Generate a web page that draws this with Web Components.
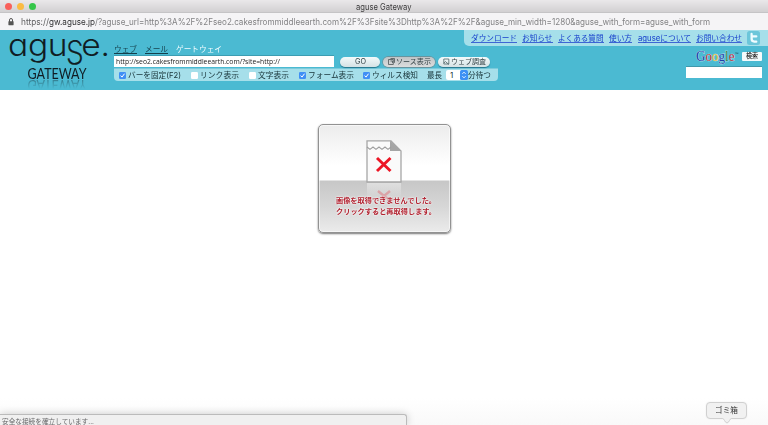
<!DOCTYPE html>
<html lang="ja"><head><meta charset="utf-8"><title>aguse Gateway</title>
<style>html,body{margin:0;height:425px;overflow:hidden;background:#fff}</style></head>
<body><gateway-window></gateway-window>
<script>
const define=(name,html,setup)=>customElements.define(name,class extends HTMLElement{
  connectedCallback(){
    if(this.shadowRoot)return;
    this.attachShadow({mode:'open'}).innerHTML=html;
    if(setup)setup(this,this.shadowRoot);
  }
});

// A single line of text set to an exact width.
define('fit-text',`<style>:host{display:inline-block;flex:none;white-space:nowrap;text-align:left}
span{display:inline-block;transform-origin:0 50%;white-space:nowrap}</style><span></span>`,(el,root)=>{
  const s=root.querySelector('span');s.textContent=el.getAttribute('text');
  const w=+el.getAttribute('w');
  const natural=s.getBoundingClientRect().width;
  el.style.width=w+'px';
  if(natural)s.style.transform=`scaleX(${w/natural})`;
});

define('title-bar',`<style>:host{display:flex;height:13px;align-items:center;position:relative;background:linear-gradient(#eae8ea,#d2d0d2);border-bottom:1px solid #c5c4c6;box-sizing:border-box;font-size:8.7px;color:#3c3b3c;line-height:12px}
i{width:7px;height:7px;border-radius:50%;margin-right:5px}.a{margin-left:5px;background:#f9605b}.b{background:#fbbb43}.c{background:#35c649}
fit-text{margin-left:315px;margin-top:1px}</style><i class="a"></i><i class="b"></i><i class="c"></i><fit-text text="aguse Gateway" w="55.5"></fit-text>`);

define('address-bar',`<style>:host{display:flex;height:17px;align-items:center;background:#f5f4f6;font-size:9px;color:#828284;line-height:16px}
svg{margin:0 7px 0 8px;flex:none}.h{color:#2e2e30}.s{color:#606062}</style>
<svg width="6" height="8" viewBox="0 0 6 8"><path d="M1.5 4V2a1.5 1.5 0 0 1 3 0v2" fill="none" stroke="#555" stroke-width="1"/><rect x=".4" y="3.2" width="5.2" height="4" rx=".4" fill="#555"/></svg>
<fit-text class="s" text="https://" w="28"></fit-text><fit-text class="h" text="gw.aguse.jp" w="46"></fit-text><fit-text text="/?aguse_url=http%3A%2F%2Fseo2.cakesfrommiddleearth.com%2F%3Fsite%3Dhttp%3A%2F%2F&aguse_min_width=1280&aguse_with_form=aguse_with_form" w="615"></fit-text>`);

define('aguse-logo',`<style>:host{display:block;position:relative;width:114px;height:60px}
svg{display:block;overflow:visible}.gate{margin:-.5px 0 0 27px;-webkit-box-reflect:below -1px linear-gradient(transparent 25%,#0006)}</style>
<svg width="114" height="37" viewBox="0 0 114 37">
<text transform="scale(1.12 1)" font-family="Inter,sans-serif" font-weight="300" font-size="30" y="25.7" fill="#101c23"><tspan x="7.1">ɑ</tspan><tspan x="25">g</tspan><tspan x="42.7">u</tspan><tspan x="58.4" y="33.5" font-size="43" font-weight="200" stroke="#101c23" stroke-width=".25" textLength="16.6" lengthAdjust="spacingAndGlyphs">s</tspan><tspan x="72.6" y="25.7">e</tspan><tspan x="89.7">.</tspan></text></svg>
<svg class="gate" width="61" height="13" viewBox="0 0 61 13"><text x=".5" y="12" font-family="Lato,sans-serif" font-size="15" textLength="59" lengthAdjust="spacingAndGlyphs" fill="#101c23">GATEWAY</text></svg>`);

define('check-option',`<style>:host{display:flex;align-items:center;flex:none;color:#183338}
svg{margin-right:2px;flex:none}</style><svg width="7" height="7" viewBox="0 0 7 7"><rect width="7" height="7" rx="1.2" fill="#fff"/></svg><fit-text></fit-text>`,(el,root)=>{
  if(el.hasAttribute('checked'))root.querySelector('svg').innerHTML='<rect width="7" height="7" rx="1.2" fill="#3f8ff5"/><path d="M1.6 3.6 3 5.1 5.5 1.7" fill="none" stroke="#fff" stroke-width="1"/>';
  const old=root.querySelector('fit-text'),t=document.createElement('fit-text');
  t.setAttribute('text',el.getAttribute('text'));t.setAttribute('w',el.getAttribute('w'));old.replaceWith(t);
});

define('pill-button',`<style>:host{display:flex;align-items:center;justify-content:center;box-sizing:border-box;flex:none;height:10px;border-radius:5px;background:linear-gradient(#f3fafb,#d5e1e4);box-shadow:0 1px 1px #26758b;color:#344246;font-size:7.4px;line-height:10px;gap:1px}
:host([pressed]){background:linear-gradient(#bfc4c6,#dcdddd);box-shadow:0 0 0 .7px #71888f}</style><slot></slot>`);

define('tool-form',`<style>:host{display:block;width:390px;padding-top:14px;box-sizing:border-box;font-size:7.9px}
nav{display:flex;height:11px;line-height:11px;gap:8px;color:#153f4b;margin-bottom:1px}
nav .u{border-bottom:1px solid #153f4b;height:9px;line-height:11px}nav .w{color:#f1fcff}
.row{display:flex;align-items:center;height:11px;font-size:7.7px}
.input{width:220px;height:11px;box-sizing:border-box;background:#fff;box-shadow:0 -1px 0 #3c9db2;padding-left:1.5px;line-height:11px;color:#222;margin-right:6px;font-family:"Open Sans",sans-serif}
.go{width:40px;margin-right:3px}.src{width:52px;margin-right:3px}.chk{width:52px}
.opts{display:flex;align-items:center;width:384px;height:13px;box-sizing:border-box;margin-top:1px;padding-left:5px;background:#a6dfea;border-radius:0 0 4px 4px;line-height:12px;font-size:8px;color:#183338;border-top:1px solid #7bcbdc}
.sel{display:flex;align-items:center;justify-content:space-between;width:22px;height:10px;background:#fff;border-radius:2px;margin-left:4px;font-size:8px}
.sel b{font-weight:400;margin-left:4px}</style>
<nav><fit-text class="u" text="ウェブ" w="23"></fit-text><fit-text class="u" text="メール" w="23"></fit-text><fit-text class="w" text="ゲートウェイ" w="46"></fit-text></nav>
<div class="row"><div class="input"><fit-text text="http://seo2.cakesfrommiddleearth.com/?site=http://" w="164"></fit-text></div>
<pill-button class="go"><fit-text text="GO" w="11"></fit-text></pill-button>
<pill-button class="src" pressed><svg width="7" height="7" viewBox="0 0 7 7"><path d="M.5 1.5h4.8v5H.5zM2.5.5h4v4.3M2.5 3h2v2" fill="none" stroke="#4d5558" stroke-width=".8"/></svg><fit-text text="ソース表示" w="35"></fit-text></pill-button>
<pill-button class="chk"><svg width="7" height="7" viewBox="0 0 7 7"><path d="M.8 1h5v5h-5zM1 5l1.5-1.5L4 5l2 1.5" fill="none" stroke="#526468" stroke-width=".8"/></svg><fit-text text="ウェブ調査" w="35"></fit-text></pill-button></div>
<div class="opts"><check-option checked text="バーを固定(F2)" w="53"></check-option><check-option style="margin-left:10px" text="リンク表示" w="39"></check-option><check-option style="margin-left:10px" text="文字表示" w="31"></check-option><check-option checked style="margin-left:10px" text="フォーム表示" w="46"></check-option><check-option checked style="margin-left:9px" text="ウィルス検知" w="46"></check-option><fit-text style="margin-left:9px" text="最長" w="15"></fit-text><span class="sel"><b>1</b><svg width="8" height="10" viewBox="0 0 8 10"><rect width="8" height="10" rx="1.5" fill="#3c91f4"/><path d="m2.4 3.8 1.6-1.6 1.6 1.6M2.4 6.2 4 7.8l1.6-1.6" fill="none" stroke="#fff" stroke-width=".9"/></svg></span><fit-text text="分待つ" w="23"></fit-text></div>`);

define('site-links',`<style>:host{display:flex;align-items:center;align-self:flex-end;box-sizing:border-box;width:304px;height:16px;padding-left:6.5px;background:#a6dfea;border-radius:0 0 0 5px;gap:5.5px;font-size:7.8px;line-height:14px;color:#1740cc}
fit-text{height:11px;line-height:12px;border-bottom:1px solid #3e66d4;margin-top:-1px;box-sizing:border-box}svg{flex:none;margin-left:-1px}</style>
<fit-text text="ダウンロード" w="46"></fit-text><fit-text text="お知らせ" w="30.5"></fit-text><fit-text text="よくある質問" w="45.5"></fit-text><fit-text text="使い方" w="23"></fit-text><fit-text text="aguseについて" w="53"></fit-text><fit-text text="お問い合わせ" w="46"></fit-text>
<svg width="13" height="14" viewBox="0 0 13 14"><rect width="13" height="14" rx="2.5" fill="#6cc6da"/><path d="M3.5 2.5c.3-1 2-1 2.2.2v1.5h3.6c1.5 0 1.5 2.3 0 2.3H5.8v1.3c0 1.2.7 1.6 1.8 1.6h1.7c1.5 0 1.5 2.3 0 2.3H7.2c-2.4 0-3.7-1.3-3.7-3.6z" fill="#effcff"/></svg>`);

define('google-search',`<style>:host{display:flex;flex-direction:column;align-items:flex-end;padding:4px 6px 0 0}
.r{display:flex;align-items:center;height:13px}.f{width:76px;height:11px;background:#fff;margin-top:4px;box-shadow:0 -1px #4098ab}
.b{display:flex;justify-content:center;width:20px;height:9px;background:#f5fafb;border-radius:1px;margin-left:3px;font-size:6.4px;line-height:9px;color:#111;font-weight:500}</style>
<div class="r"><svg width="44" height="18" viewBox="0 0 44 18"><text x="1" y="13" font-family="Liberation Serif,serif" font-size="15" textLength="38.5" lengthAdjust="spacingAndGlyphs" stroke="#d5eef5" stroke-width=".7" paint-order="stroke"><tspan fill="#1f3fa8">G</tspan><tspan fill="#b52a38">o</tspan><tspan fill="#e8b52b">o</tspan><tspan fill="#1f3fa8">g</tspan><tspan fill="#2c7d4b">l</tspan><tspan fill="#b52a38">e</tspan></text><text x="39.5" y="6.6" font-family="Liberation Sans,sans-serif" font-size="4" fill="#164353">™</text></svg><div class="b"><fit-text text="検索" w="12"></fit-text></div></div><div class="f"></div>`);

define('gateway-header',`<style>:host{display:flex;height:60px;background:#4bbad2;overflow:hidden}.right{margin-left:auto;display:flex;flex-direction:column}
tool-form{margin-right:-60px}</style><aguse-logo></aguse-logo><tool-form></tool-form><div class="right"><site-links></site-links><google-search></google-search></div>`);

define('retry-card',`<style>:host{display:block;box-sizing:border-box;width:133px;height:109px;border:1.5px solid #929292;border-radius:5px;overflow:hidden;background:linear-gradient(#ececec 0,#fff 40px,#fff 55px,#c7c7c7 56px,#d7d7d7 82px,#ebebeb 100%);box-shadow:0 1px 2px #777,inset 0 0 0 1px #ffffff90;text-align:center}
svg{display:block;margin:15px auto 0 47px}p{position:relative;margin:-4px 0 0;font-size:7.3px;font-weight:700;line-height:11px;color:#b22331;text-shadow:0 0 2px #fff,0 0 2px #fff}fit-text{display:block;margin:0 auto 0 17px}</style>
<svg width="38" height="59" viewBox="0 0 38 59"><defs><linearGradient id="r" x1="0" y1="0" x2="0" y2="1"><stop stop-color="#eee" stop-opacity=".6"/><stop offset="1" stop-color="#eee" stop-opacity="0"/></linearGradient></defs>
<path d="M1 .8h24L35 11v31H1z" fill="#fafafa" stroke="#a6a6a6" stroke-width="1.3"/><path d="M24 .5V11h11z" fill="#a5a5a5"/><path d="M1 7l3 2.4L7 7l3 2.4L13 7l3 2.4L19 7l3 2.4L25 7" fill="none" stroke="#9d9d9d" stroke-width="1.1"/>
<path d="m11 18 13.5 13M24.5 18 11 31" stroke="#ec1625" stroke-width="2.9"/><rect x="1" y="43" width="34" height="16" fill="url(#r)"/><path d="m12 51 6 5 6-5M14 59l4-3 4 3" stroke="#df7078" stroke-width="2.4" fill="none" opacity=".5"/></svg>
<p><fit-text text="画像を取得できませんでした。" w="100"></fit-text><fit-text text="クリックすると再取得します。" w="100"></fit-text></p>`);

define('status-bar',`<style>:host{display:block;box-sizing:border-box;width:407px;height:11px;border:1px solid #bbb;border-left:0;border-bottom:0;border-radius:0 3px 0 0;background:#f0f0f0;box-shadow:0 0 9px #0003;padding-left:2px;font-size:7px;line-height:13px;color:#68686a}</style><fit-text text="安全な接続を確立しています..." w="92"></fit-text>`);

define('dock-tooltip',`<style>:host{display:block;position:relative;box-sizing:border-box;width:41px;height:17px;border:1px solid #d0d0d0;border-radius:4px;background:#f1f1f1;box-shadow:0 0 2px #0001;text-align:center;font-size:7.9px;line-height:15px;color:#353535}
svg{position:absolute;left:15px;top:15px}</style><fit-text text="ゴミ箱" w="23"></fit-text><svg width="10" height="6" viewBox="0 0 10 6"><path d="M0 0c2 0 3 5 5 5s3-5 5-5" fill="#f1f1f1" stroke="#d0d0d0"/><path d="M0-.4h10" stroke="#f1f1f1"/></svg>`);

define('gateway-window',`<style>:host{display:flex;flex-direction:column;width:768px;height:425px;overflow:hidden;font-family:Inter,"Noto Sans CJK JP",sans-serif}
main{flex:1;display:flex;justify-content:center;padding-top:34px;box-sizing:border-box;background:linear-gradient(#fff 92%,#f9f9f9)}
footer{position:absolute;left:0;top:402px;width:768px;height:23px;display:flex;justify-content:space-between;align-items:flex-end}dock-tooltip{margin:0 21.5px 6px 0}</style>
<title-bar></title-bar><address-bar></address-bar><gateway-header></gateway-header><main><retry-card></retry-card></main><footer><status-bar></status-bar><dock-tooltip></dock-tooltip></footer>`);
</script></body></html>
